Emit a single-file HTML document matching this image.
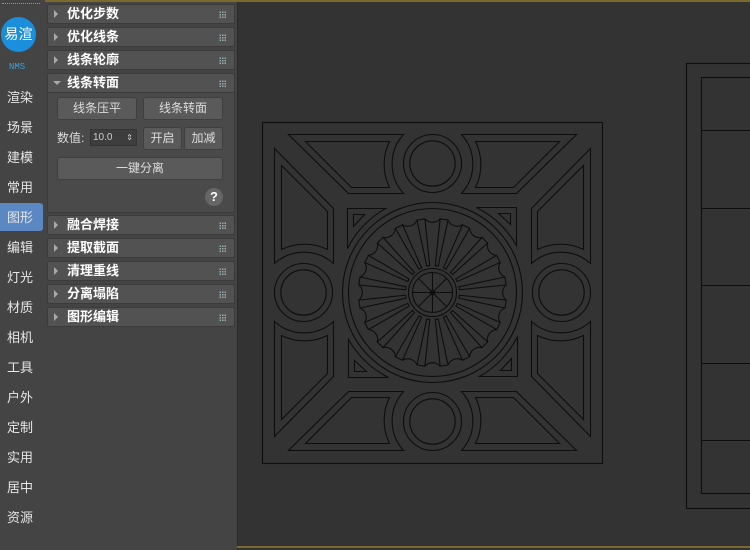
<!DOCTYPE html>
<html><head><meta charset="utf-8"><style>
*{margin:0;padding:0;box-sizing:border-box}
body{width:750px;height:550px;overflow:hidden;background:#444;font-family:"Liberation Sans","Noto Sans CJK SC",sans-serif;position:relative}
.side{position:absolute;left:0;top:0;width:45px;height:550px;background:#444}
.dots{position:absolute;left:2px;top:3px;width:38px;border-top:1px dotted #999}
.logo{position:absolute;left:1px;top:17px;width:35px;height:35px;border-radius:50%;background:#1c8fdc;color:#fff;font-size:14px;line-height:35px;text-align:center}
.nms{position:absolute;left:9px;top:62px;color:#3aa0e0;font-size:9px;font-family:"Liberation Mono",monospace}
.mi{position:absolute;left:7px;color:#e6e6e6;font-size:13px;height:20px;line-height:20px}
.sel{position:absolute;left:0;top:203px;width:43px;height:28px;background:#5b87c2;border-radius:0 3px 3px 0}
.panel{position:absolute;left:45px;top:0;width:192px;height:550px;background:#444}
.hd{position:absolute;left:2px;width:188px;height:20px;background:#525252;border:1px solid #3b3b3b;border-radius:2px;color:#fff;font-weight:bold;font-size:13px;line-height:18px;padding-left:19px}
.hd:before{content:"";position:absolute;left:6px;top:5px;border-left:4px solid #aaa;border-top:4px solid transparent;border-bottom:4px solid transparent}
.hd.op:before{left:5px;top:7px;border-top:4px solid #aaa;border-left:4px solid transparent;border-right:4px solid transparent;border-bottom:0}
.hd:after{content:"";position:absolute;right:8px;top:6px;width:7px;height:7px;background:radial-gradient(circle,#9aa 0.7px,transparent 1px) 0 0/2.5px 2.5px}
.box{position:absolute;left:2px;top:74px;width:188px;height:139px;background:#4a4a4a;border:1px solid #3b3b3b;border-radius:2px}
.btn{position:absolute;background:#5a5a5a;border:1px solid #3f3f3f;border-radius:3px;color:#ddd;font-size:12px;text-align:center}
.vp{position:absolute;left:237px;top:0;width:513px;height:550px;background:#333;border-left:1px solid #2a2a2a}
.gold{position:absolute;left:45px;width:705px;height:2px;background:#7c6a2c}
</style></head><body>
<div class="side">
<div class="dots"></div>
<div class="logo">易渲</div>
<div class="nms">NMS</div>
<div class="sel"></div>
<div class="mi" style="top:88px">渲染</div>
<div class="mi" style="top:118px">场景</div>
<div class="mi" style="top:148px">建模</div>
<div class="mi" style="top:178px">常用</div>
<div class="mi" style="top:208px">图形</div>
<div class="mi" style="top:238px">编辑</div>
<div class="mi" style="top:268px">灯光</div>
<div class="mi" style="top:298px">材质</div>
<div class="mi" style="top:328px">相机</div>
<div class="mi" style="top:358px">工具</div>
<div class="mi" style="top:388px">户外</div>
<div class="mi" style="top:418px">定制</div>
<div class="mi" style="top:448px">实用</div>
<div class="mi" style="top:478px">居中</div>
<div class="mi" style="top:508px">资源</div>
</div>
<div class="panel">
<div class="box"></div>
<div class="hd" style="top:4px">优化步数</div>
<div class="hd" style="top:27px">优化线条</div>
<div class="hd" style="top:50px">线条轮廓</div>
<div class="hd op" style="top:73px">线条转面</div>
<div class="btn" style="left:12px;top:97px;width:80px;height:23px;line-height:21px">线条压平</div>
<div class="btn" style="left:98px;top:97px;width:80px;height:23px;line-height:21px">线条转面</div>
<div style="position:absolute;left:12px;top:129px;color:#ddd;font-size:12px">数值:</div>
<div style="position:absolute;left:45px;top:129px;width:47px;height:17px;background:#3d3d3d;border:1px solid #353535;color:#ccc;font-size:10px;line-height:15px;padding-left:2px">10.0<span style="position:absolute;right:3px;top:0;font-size:8px">⇕</span></div>
<div class="btn" style="left:98px;top:127px;width:39px;height:23px;line-height:21px">开启</div>
<div class="btn" style="left:139px;top:127px;width:39px;height:23px;line-height:21px">加减</div>
<div class="btn" style="left:12px;top:157px;width:166px;height:23px;line-height:21px">一键分离</div>
<div style="position:absolute;left:160px;top:188px;width:18px;height:18px;border-radius:50%;background:#666;color:#fff;font-weight:bold;font-size:13px;line-height:18px;text-align:center">?</div>
<div class="hd" style="top:215px">融合焊接</div>
<div class="hd" style="top:238px">提取截面</div>
<div class="hd" style="top:261px">清理重线</div>
<div class="hd" style="top:284px">分离塌陷</div>
<div class="hd" style="top:307px">图形编辑</div>
</div>
<div class="vp">
<svg width="513" height="550" style="position:absolute;left:0;top:0">
<g fill="none" stroke="#0e0e0e" stroke-width="1.1">
<rect x="448.5" y="63.5" width="80" height="445"/>
<rect x="463.5" y="77.5" width="60" height="416"/>
<line x1="463" y1="130.5" x2="513" y2="130.5"/>
<line x1="463" y1="208.5" x2="513" y2="208.5"/>
<line x1="463" y1="285.5" x2="513" y2="285.5"/>
<line x1="463" y1="363.5" x2="513" y2="363.5"/>
<line x1="463" y1="440.5" x2="513" y2="440.5"/>
<g transform="translate(24.5,122.5)">
<defs>
<g id="tp">
<path d="M26 12 L141 12 A44 44 0 0 0 141 71 L86 71 Z"/>
<path d="M43 19 L127 19 A52 52 0 0 0 127 65 L89 65 Z"/>
</g>
<g id="side">
<use href="#tp"/>
<use href="#tp" transform="matrix(-1 0 0 1 340 0)"/>
<circle cx="170" cy="41" r="22.7"/>
<circle cx="170" cy="41" r="29"/>
<path d="M85 86 L123 86 A96 96 0 0 0 85 126 Z"/>
<path d="M91 92 L102 92 L91 104 Z"/>
</g>
<g id="sp">
<path d="M168.5 143 L171.5 143 L174 96 L166 96 Z"/>
<path d="M174 96 A10 10 0 0 0 189.1 98.4"/>
</g>
</defs>
<rect x="0" y="0" width="340" height="341"/>
<use href="#side"/>
<use href="#side" transform="rotate(90 170 170)"/>
<use href="#side" transform="rotate(180 170 170)"/>
<use href="#side" transform="rotate(270 170 170)"/>
<circle cx="170" cy="170" r="90"/>
<circle cx="170" cy="170" r="84"/>
<circle cx="170" cy="170" r="24"/>
<circle cx="170" cy="170" r="20"/>
<circle cx="170" cy="170" r="2.5"/>
<path d="M170 150V190M150 170H190M156 156L184 184M184 156L156 184"/>
<use href="#sp" transform="rotate(9 170 170)"/>
<use href="#sp" transform="rotate(27 170 170)"/>
<use href="#sp" transform="rotate(45 170 170)"/>
<use href="#sp" transform="rotate(63 170 170)"/>
<use href="#sp" transform="rotate(81 170 170)"/>
<use href="#sp" transform="rotate(99 170 170)"/>
<use href="#sp" transform="rotate(117 170 170)"/>
<use href="#sp" transform="rotate(135 170 170)"/>
<use href="#sp" transform="rotate(153 170 170)"/>
<use href="#sp" transform="rotate(171 170 170)"/>
<use href="#sp" transform="rotate(189 170 170)"/>
<use href="#sp" transform="rotate(207 170 170)"/>
<use href="#sp" transform="rotate(225 170 170)"/>
<use href="#sp" transform="rotate(243 170 170)"/>
<use href="#sp" transform="rotate(261 170 170)"/>
<use href="#sp" transform="rotate(279 170 170)"/>
<use href="#sp" transform="rotate(297 170 170)"/>
<use href="#sp" transform="rotate(315 170 170)"/>
<use href="#sp" transform="rotate(333 170 170)"/>
<use href="#sp" transform="rotate(351 170 170)"/>
</g>
</g>
</svg>
</div>
<div class="gold" style="top:0"></div>
<div class="gold" style="top:546px;left:237px;width:513px"></div>
</body></html>
